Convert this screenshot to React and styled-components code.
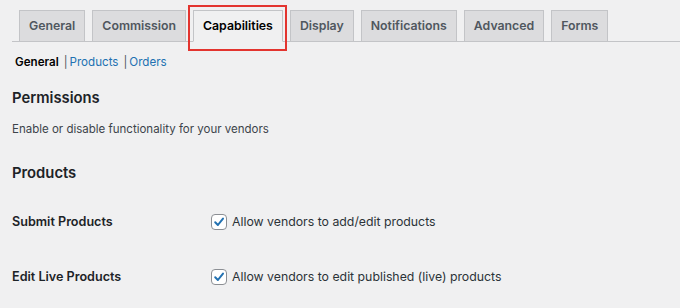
import styled, { createGlobalStyle } from 'styled-components';

const GlobalStyle = createGlobalStyle`
  html, body {
    margin: 0;
    padding: 0;
    background: #f0f0f1;
  }
  body {
    font-family: Inter, "Noto Sans", "Liberation Sans", sans-serif;
    color: #1d2327;
  }
`;

const Page = styled.div`
  padding-left: 12px;
  width: 668px;
  height: 308px;
  overflow: hidden;
`;

const TabBar = styled.nav`
  display: flex;
  padding-top: 10px;
  border-bottom: 1px solid #c3c4c7;
`;

const Tab = styled.a`
  position: relative;
  display: block;
  margin-left: 7px;
  margin-bottom: -1px;
  padding: 5px 9px;
  border: 1px solid #c3c4c7;
  background: ${({ $active }) => ($active ? '#f0f0f1' : '#dcdcde')};
  border-bottom-color: ${({ $active }) => ($active ? '#f0f0f1' : '#c3c4c7')};
  color: ${({ $active }) => ($active ? '#000' : '#50575e')};
  font-size: 12.3px;
  font-weight: 600;
  line-height: 20px;
  white-space: nowrap;
  cursor: pointer;
`;

const Highlight = styled.span`
  position: absolute;
  left: -6px;
  right: -5px;
  top: -6px;
  bottom: -10px;
  border: 2px solid #e3342f;
  pointer-events: none;
`;

const SubNav = styled.ul`
  display: flex;
  list-style: none;
  margin: 10px 0 0 3px;
  padding: 0;
  font-size: 11.6px;
  line-height: 20px;
`;

const SubItem = styled.li`
  color: #50575e;
  margin-right: 5px;
`;

const SubLink = styled.a`
  color: ${({ $current }) => ($current ? '#000' : '#2271b1')};
  font-weight: ${({ $current }) => ($current ? 600 : 400)};
  margin-left: ${({ $current }) => ($current ? '0' : '2px')};
  text-decoration: none;
`;

const Heading = styled.h2`
  margin: ${({ $top }) => $top} 0 0;
  font-size: 14.8px;
  line-height: 22px;
  font-weight: 600;
  color: #1d2327;
`;

const Description = styled.p`
  margin: 10px 0 0;
  font-size: 11.5px;
  line-height: 20px;
  color: #3c434a;
`;

const FormTable = styled.div`
  margin-top: 10px;
  display: grid;
  grid-template-columns: 199px 1fr;
  grid-auto-rows: 55px;
  align-items: center;
`;

const RowLabel = styled.div`
  font-size: 12.6px;
  font-weight: 600;
  line-height: 20px;
  color: #1d2327;
`;

const CheckLabel = styled.label`
  display: flex;
  align-items: center;
  gap: 5px;
  font-size: 12.3px;
  line-height: 20px;
  color: #2c3338;
`;

const Box = styled.span`
  width: 14px;
  height: 14px;
  border: 1px solid #8c8f94;
  border-radius: 4px;
  background: #fff;
  display: flex;
  align-items: center;
  justify-content: center;
`;

const Checkbox = () => (
  <Box>
    <svg width="12" height="12" viewBox="0 0 12 12">
      <path d="M2.2 6.3 L4.9 9 L10 2.6" fill="none" stroke="#2271b1" strokeWidth="2" strokeLinecap="round" strokeLinejoin="round" />
    </svg>
  </Box>
);

const tabs = ['General', 'Commission', 'Capabilities', 'Display', 'Notifications', 'Advanced', 'Forms'];
const subs = ['General', 'Products', 'Orders'];
const rows = [
  { label: 'Submit Products', text: 'Allow vendors to add/edit products' },
  { label: 'Edit Live Products', text: 'Allow vendors to edit published (live) products' },
];

const App = () => (
  <Page>
    <GlobalStyle />
    <TabBar>
      {tabs.map((t) => (
        <Tab key={t} $active={t === 'Capabilities'}>
          {t}
          {t === 'Capabilities' && <Highlight />}
        </Tab>
      ))}
    </TabBar>
    <SubNav>
      {subs.map((s, i) => (
        <SubItem key={s}>
          {i > 0 && '|'}
          <SubLink $current={i === 0}>{s}</SubLink>
        </SubItem>
      ))}
    </SubNav>
    <Heading $top="15px">Permissions</Heading>
    <Description>Enable or disable functionality for your vendors</Description>
    <Heading $top="23px">Products</Heading>
    <FormTable>
      {rows.map((r) => (
        <>
          <RowLabel key={r.label}>{r.label}</RowLabel>
          <CheckLabel key={r.text}>
            <Checkbox />
            {r.text}
          </CheckLabel>
        </>
      ))}
    </FormTable>
  </Page>
);

export default App;
